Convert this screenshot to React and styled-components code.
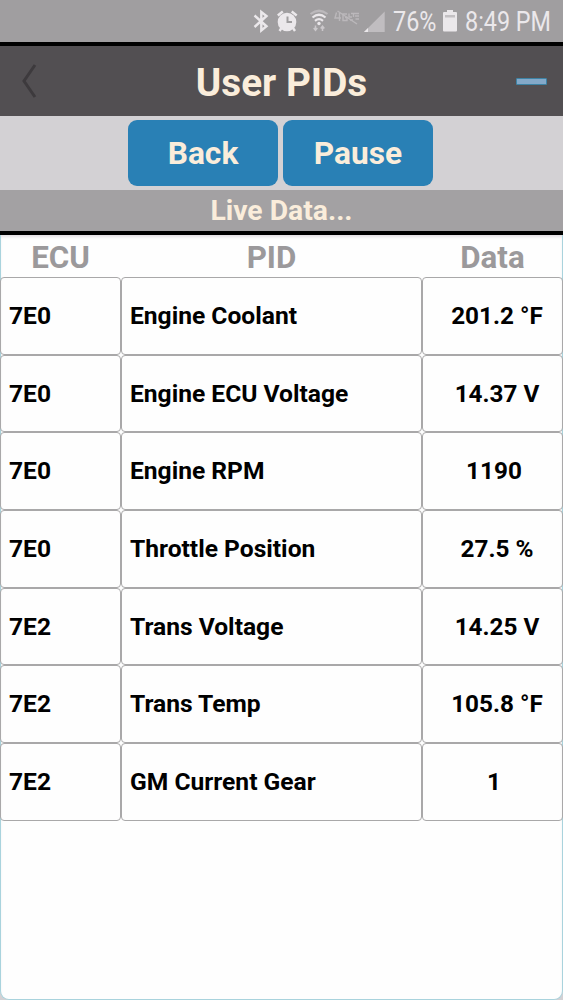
import React, { useState } from 'react'
import styled, { createGlobalStyle } from 'styled-components';

const GlobalStyle = createGlobalStyle`
  * {
    box-sizing: border-box;
  }

  body {
    margin: 0;
    background: #d3d1d4;
    font-family: Roboto, sans-serif;
  }
`;

const Screen = styled.div`
  height: 1000px;
  display: flex;
  flex-direction: column;
  overflow: hidden;
`;

const StatusBar = styled.div`
  height: 42px;
  flex: none;
  display: flex;
  align-items: center;
  background: #a09ea0;
  color: #ebe8eb;
  padding-left: 252px;

  svg {
    flex: none;
    display: block;
  }
`;

const StatusText = styled.span`
  flex: none;
  width: ${(props) => props.$width}px;
  margin-left: ${(props) => props.$gap}px;
  font-size: 27px;
  line-height: 42px;
  padding-top: 2px;
  white-space: nowrap;
  transform: scaleX(0.865);
  transform-origin: left center;
`;

const Header = styled.header`
  height: 74px;
  flex: none;
  display: grid;
  grid-template-columns: 60px 1fr 60px;
  align-items: center;
  background: #524f52;
  border-top: 4px solid #000;
`;

const Title = styled.h1`
  margin: 0;
  padding-top: 3px;
  text-align: center;
  color: #faeddb;
  font-size: 38.7px;
  line-height: 44px;
  font-weight: 700;
`;

const BackArrow = styled.svg`
  margin-left: 20px;
`;

const MinusMark = styled.span`
  width: 31px;
  height: 7px;
  margin-left: 13px;
  background: #84a9c9;
  border: 1px solid #3d83a5;
  border-radius: 1px;
`;

const Toolbar = styled.div`
  height: 74px;
  flex: none;
  display: flex;
  justify-content: center;
  gap: 5px;
  padding: 4px 2px 0 0;
  background: #d3d1d4;
`;

const ToolbarButton = styled.button`
  width: 150px;
  height: 66px;
  border: none;
  border-radius: 9px;
  padding: 2px 0 0;
  background: #2980b5;
  color: #faeddb;
  font-family: inherit;
  font-size: 31.7px;
  line-height: 38px;
  font-weight: 700;
  cursor: pointer;
`;

const LiveBar = styled.div`
  height: 45px;
  flex: none;
  background: #a3a1a3;
  border-bottom: 4px solid #000;
  color: #faeddb;
  text-align: center;
  font-size: 28.3px;
  line-height: 41px;
  font-weight: 700;
`;

const Content = styled.main`
  flex: 1;
  background: #fefefe;
  border: 1px solid #a9d3dd;
  border-top: none;
  border-radius: 0 0 9px 9px;
  box-shadow: inset 0 3px 3px -1px #e3dfe3;
`;

const Row = styled.div`
  display: grid;
  grid-template-columns: 121px 301px 141px;
  margin: 0 -1px;
`;

const HeadCell = styled.div`
  height: 42px;
  color: #9b999b;
  font-size: 31.3px;
  line-height: 45px;
  font-weight: 700;
  text-align: center;
`;

const Cell = styled.div`
  height: 77.7px;
  border: 1px solid #a9a8a9;
  border-radius: 4px;
  padding-left: ${(props) => (props.$center ? 9 : 8)}px;
  color: #000;
  font-size: ${(props) => (props.$center ? 24.3 : 24.6)}px;
  line-height: 76px;
  font-weight: 700;
  white-space: pre;
  text-align: ${(props) => (props.$center ? 'center' : 'left')};
`;

const pids = [
  { id: 1, ecu: '7E0', name: 'Engine Coolant', data: '201.2', unit: '°F' },
  { id: 2, ecu: '7E0', name: 'Engine ECU Voltage', data: '14.37', unit: 'V' },
  { id: 3, ecu: '7E0', name: 'Engine RPM', data: '1190', unit: '' },
  { id: 4, ecu: '7E0', name: 'Throttle Position', data: '27.5', unit: '%' },
  { id: 5, ecu: '7E2', name: 'Trans Voltage', data: '14.25', unit: 'V' },
  { id: 6, ecu: '7E2', name: 'Trans Temp', data: '105.8', unit: '°F' },
  { id: 7, ecu: '7E2', name: 'GM Current Gear', data: '1', unit: '' },
];

const StatusIcons = () => (
  <svg width="136" height="42" viewBox="252 0 136 42" fill="none">
    {/* bluetooth */}
    <path d="M254.5 15.5 L266.5 26.3 L261.3 30.5 V12 L266.5 16 L254.5 27" stroke="#ebe8eb" strokeWidth="2.4" />
    {/* alarm */}
    <circle cx="287" cy="22" r="9.3" fill="#ebe8eb" />
    <path d="M277.8 15.5 L282.8 11.5 M296.7 15.5 L291.7 11.5 M281.5 28 L279.5 31 M293 28 L295 31" stroke="#ebe8eb" strokeWidth="2.4" />
    <path d="M287.5 16.5 V22 H292" stroke="#a09ea0" strokeWidth="2" />
    {/* wifi */}
    <path d="M310.5 14 Q319 7.5 327.5 14" stroke="#bcb9bc" strokeWidth="2.2" />
    <path d="M312.5 17.5 Q319 12 325.5 17.5 M315 20.8 Q319 17.5 323 20.8" stroke="#ebe8eb" strokeWidth="2.2" />
    <circle cx="319" cy="23.5" r="1.7" fill="#ebe8eb" />
    <path d="M315.5 25.5 V30 M313.7 28 L315.5 30.3 L317.3 28 M322.5 31 V26.5 M320.7 28.5 L322.5 26.2 L324.3 28.5" stroke="#cbc8cb" strokeWidth="1.5" />
    {/* 4G LTE, off */}
    <path d="M336.5 12.5 L335 18 H341 M339.5 13 V21 M347 14 H343 V20.5 H347 V17.5 H345 M349 13.5 V17 H352 M351 13.5 H359 M353.5 13.5 V17 M359 16 H355 M355.5 19 H359 M350 20 H353" stroke="#bbb8bb" strokeWidth="1.4" />
    <path d="M337.5 11 L357 24" stroke="#bbb8bb" strokeWidth="1.4" />
    {/* signal */}
    <path d="M364 32 L384.7 11.5 V32 Z" fill="#c0bdc0" />
    <path d="M364 32 L368 28 V32 Z" fill="#ebe8eb" />
  </svg>
);

const BatteryIcon = () => (
  <svg width="16" height="42" viewBox="0 0 16 42">
    <path d="M5 10 H11 V12 H14 Q15 12 15 13 V30.5 Q15 31.5 14 31.5 H2 Q1 31.5 1 30.5 V13 Q1 12 2 12 H5 Z" fill="#ebe8eb" />
    <rect x="3" y="15" width="10" height="2.5" fill="#c3c0c3" />
  </svg>
);

const App = () => {
  const [paused, setPaused] = useState(false);

  return (
    <>
      <GlobalStyle />
      <Screen>
        <StatusBar>
          <StatusIcons />
          <StatusText $width={49} $gap={5}>76%</StatusText>
          <BatteryIcon />
          <StatusText $width={100} $gap={7}>8:49 PM</StatusText>
        </StatusBar>

        <Header>
          <BackArrow width="18" height="38" viewBox="0 0 18 38" fill="none">
            <path d="M15 3 L4 19 L15 35" stroke="#3d3a3d" strokeWidth="3" />
          </BackArrow>
          <Title>User PIDs</Title>
          <MinusMark />
        </Header>

        <Toolbar>
          <ToolbarButton>Back</ToolbarButton>
          <ToolbarButton onClick={() => setPaused(!paused)}>
            {paused ? 'Resume' : 'Pause'}
          </ToolbarButton>
        </Toolbar>
        <LiveBar>Live Data...</LiveBar>

        <Content>
          <Row>
            <HeadCell>ECU</HeadCell>
            <HeadCell>PID</HeadCell>
            <HeadCell>Data</HeadCell>
          </Row>
          {pids.map((pid) => (
            <Row key={pid.id}>
              <Cell>{pid.ecu}</Cell>
              <Cell>{pid.name}</Cell>
              {/* the gap before the unit stays even when there is no unit */}
              <Cell $center>{pid.data + '\u00a0' + pid.unit}</Cell>
            </Row>
          ))}
        </Content>
      </Screen>
    </>
  );
};

export default App;
